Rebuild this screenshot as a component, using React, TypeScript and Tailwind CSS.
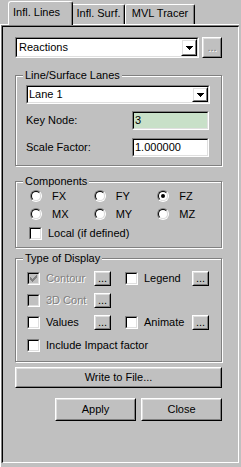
import React from 'react';

type P = { className?: string; innerClassName?: string; children?: React.ReactNode };

function Raised({ className = '', children }: P) {
  return (
    <div className={`border border-t-white border-l-white border-r-black border-b-black ${className}`}>
      <div className="w-full h-full border border-t-[#dfdfdf] border-l-[#dfdfdf] border-r-[#808080] border-b-[#808080] flex items-center justify-center">
        {children}
      </div>
    </div>
  );
}

function Sunken({ className = '', innerClassName = '', children }: P) {
  return (
    <div className={`border border-t-[#808080] border-l-[#808080] border-r-white border-b-white ${className}`}>
      <div className={`w-full h-full border border-t-black border-l-black border-r-[#dfdfdf] border-b-[#dfdfdf] ${innerClassName}`}>
        {children}
      </div>
    </div>
  );
}

function Arrow() {
  return (
    <svg width="7" height="4" viewBox="0 0 7 4" shapeRendering="crispEdges" fill="#000">
      <rect x="0" y="0" width="7" height="1" />
      <rect x="1" y="1" width="5" height="1" />
      <rect x="2" y="2" width="3" height="1" />
      <rect x="3" y="3" width="1" height="1" />
    </svg>
  );
}

function Combo({ className = '', text, pad = 'pl-[2px]' }: { className?: string; text: string; pad?: string }) {
  return (
    <Sunken className={className} innerClassName="bg-white flex items-center">
      <span className={`flex-1 ${pad}`}>{text}</span>
      <Raised className="w-[16px] h-full">
        <Arrow />
      </Raised>
    </Sunken>
  );
}

function Group({ title, className = '', children }: { title: string; className?: string; children?: React.ReactNode }) {
  return (
    <div className={`relative border border-[#808080] shadow-[inset_1px_1px_0_#fff,1px_1px_0_#fff] ${className}`}>
      <span className="absolute left-[7px] top-[-7px] px-[2px] bg-[#c0c0c0] leading-[13px]">{title}</span>
      {children}
    </div>
  );
}

function Radio({ checked = false, label }: { checked?: boolean; label: string }) {
  return (
    <div className="flex items-center w-[70px] h-[16px]">
      <div className="w-[12px] h-[12px] shrink-0 rounded-full border border-t-[#808080] border-l-[#808080] border-r-white border-b-white">
        <div className="w-full h-full rounded-full border border-t-black border-l-black border-r-[#dfdfdf] border-b-[#dfdfdf] bg-white flex items-center justify-center">
          {checked && <div className="w-[4px] h-[4px] rounded-full bg-black" />}
        </div>
      </div>
      <span className="ml-[10px]">{label}</span>
    </div>
  );
}

function Check({ checked = false, disabled = false }: { checked?: boolean; disabled?: boolean }) {
  return (
    <Sunken
      className="w-[13px] h-[13px] shrink-0"
      innerClassName={`${disabled ? 'bg-[#c0c0c0]' : 'bg-white'} flex items-center justify-center`}
    >
      {checked && (
        <svg width="7" height="7" viewBox="0 0 7 7" shapeRendering="crispEdges" fill={disabled ? '#808080' : '#000'}>
          <rect x="6" y="0" width="1" height="1" />
          <rect x="5" y="1" width="2" height="1" />
          <rect x="0" y="2" width="1" height="1" />
          <rect x="4" y="2" width="3" height="1" />
          <rect x="0" y="3" width="2" height="1" />
          <rect x="3" y="3" width="3" height="1" />
          <rect x="0" y="4" width="5" height="1" />
          <rect x="1" y="5" width="3" height="1" />
          <rect x="2" y="6" width="1" height="1" />
        </svg>
      )}
    </Sunken>
  );
}

const dis = 'text-[#808080] [text-shadow:1px_1px_0_#fff]';

function CheckItem({ label, checked = false, disabled = false, className = '' }: { label: string; checked?: boolean; disabled?: boolean; className?: string }) {
  return (
    <div className={`flex items-center ${className}`}>
      <Check checked={checked} disabled={disabled} />
      <span className={`ml-[6px] ${disabled ? dis : ''}`}>{label}</span>
    </div>
  );
}

function Dots() {
  return (
    <Raised className="w-[17px] h-[15px] shrink-0">
      <span className="leading-[11px] pt-[1px]">...</span>
    </Raised>
  );
}

export default function App() {
  return (
    <div className="w-[241px] h-[467px] bg-[#c0c0c0] flex flex-col text-[11px] leading-[13px] text-black font-['Liberation_Sans',Arial,sans-serif] overflow-hidden">
      <div className="h-[24px] shrink-0 flex items-end pl-[8px]">
        <div className="relative z-10 -mb-px h-[24px] w-[65px] bg-[#c0c0c0] border-l border-t border-r border-l-white border-t-white border-r-black rounded-t-[3px] shadow-[inset_-1px_0_0_#808080] pl-[4px] pt-[4px]">
          Infl. Lines
        </div>
        <div className="h-[20px] w-[52px] border-t border-r border-t-white border-r-black rounded-tr-[2px] shadow-[inset_-1px_0_0_#808080] pt-[2px] text-center">
          Infl. Surf.
        </div>
        <div className="h-[20px] w-[70px] border-l border-t border-r border-l-white border-t-white border-r-black rounded-t-[2px] shadow-[inset_-1px_0_0_#808080] pt-[2px] text-center">
          MVL Tracer
        </div>
      </div>

      <div className="flex-1 flex flex-col w-[239px] border-l border-t border-l-white border-t-white">
        <div className="flex-1 mb-[4px] flex flex-col border-l border-t border-l-[#808080] border-t-[#808080]">
          <div className="flex-1 flex flex-col border border-l-black border-t-black border-r-white border-b-white pl-[12px] pt-[10px]">
            <div className="flex gap-[3px]">
              <Combo className="w-[184px] h-[21px]" text="Reactions" />
              <Raised className="w-[20px] h-[21px]">
                <span className={dis}>...</span>
              </Raised>
            </div>

            <Group title="Line/Surface Lanes" className="mt-[17px] w-[207px] h-[91px] flex flex-col pl-[10px] pt-[9px]">
              <Combo className="w-[184px] h-[19px]" text="Lane 1" pad="pl-[1px]" />
              <div className="mt-[7px] flex items-center h-[19px]">
                <span className="w-[106px]">Key Node:</span>
                <Sunken className="w-[77px] h-[19px]" innerClassName="bg-[#c8e0c8] flex items-center pl-[1px]">
                  3
                </Sunken>
              </div>
              <div className="mt-[8px] flex items-center h-[19px]">
                <span className="w-[106px]">Scale Factor:</span>
                <Sunken className="w-[77px] h-[19px]" innerClassName="bg-white flex items-center pl-[1px]">
                  1.000000
                </Sunken>
              </div>
            </Group>

            <Group title="Components" className="mt-[15px] w-[207px] h-[67px] flex flex-col pl-[13px] pt-[6px]">
              <div className="flex pl-[1px]">
                <Radio label="FX" />
                <Radio label="FY" />
                <Radio label="FZ" checked />
              </div>
              <div className="flex pl-[1px] mt-[2px]">
                <Radio label="MX" />
                <Radio label="MY" />
                <Radio label="MZ" />
              </div>
              <CheckItem className="mt-[3px] h-[16px]" label="Local (if defined)" />
            </Group>

            <Group title="Type of Display" className="mt-[10px] w-[207px] h-[104px] flex flex-col pl-[11px] pt-[11px]">
              <div className="flex items-center h-[16px]">
                <CheckItem className="w-[67px]" label="Contour" checked disabled />
                <Dots />
                <div className="w-[14px]" />
                <CheckItem className="w-[67px]" label="Legend" />
                <Dots />
              </div>
              <div className="flex items-center h-[16px] mt-[6px]">
                <CheckItem className="w-[67px]" label="3D Cont" disabled />
                <Dots />
              </div>
              <div className="flex items-center h-[16px] mt-[6px]">
                <CheckItem className="w-[67px]" label="Values" />
                <Dots />
                <div className="w-[14px]" />
                <CheckItem className="w-[67px]" label="Animate" />
                <Dots />
              </div>
              <CheckItem className="h-[16px] mt-[7px]" label="Include Impact factor" />
            </Group>

            <Raised className="mt-[5px] w-[207px] h-[21px]">
              <span>Write to File...</span>
            </Raised>

            <div className="mt-[10px] flex gap-[5px] pl-[40px]">
              <Raised className="w-[81px] h-[23px]">
                <span>Apply</span>
              </Raised>
              <Raised className="w-[81px] h-[23px]">
                <span>Close</span>
              </Raised>
            </div>
          </div>
        </div>
      </div>
    </div>
  );
}
